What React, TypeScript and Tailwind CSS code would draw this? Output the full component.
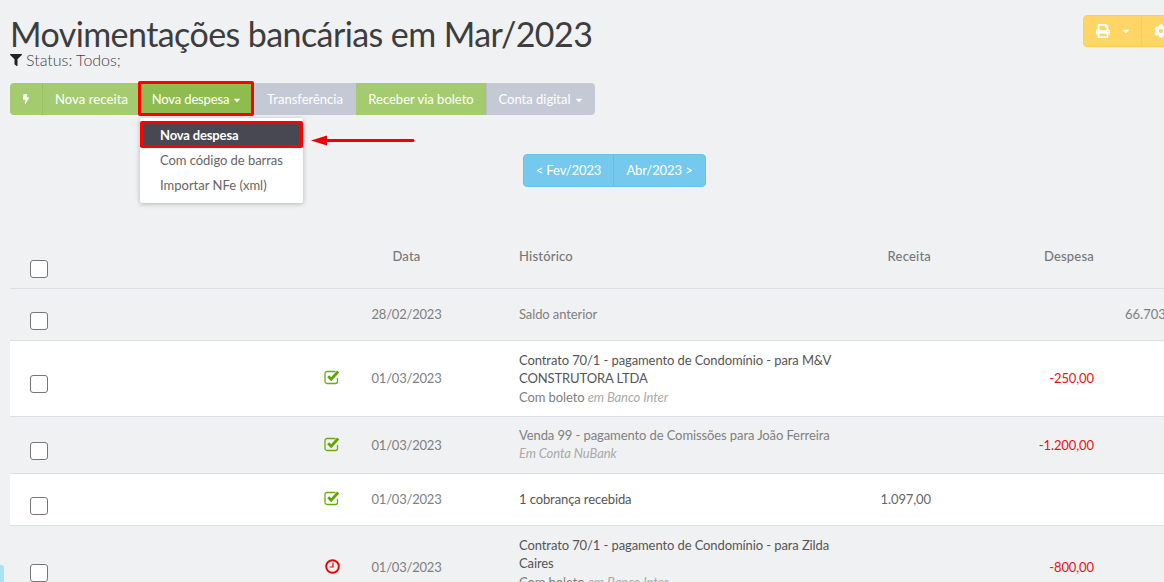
import React from 'react';
import { FaBolt, FaCaretDown, FaCog, FaFilter, FaPrint } from 'react-icons/fa';

const CheckIcon = () => (
  <svg width="17" height="15" viewBox="0 0 17 15" className="block">
    <path d="M13.5 8v3.5a2 2 0 0 1-2 2H3a2 2 0 0 1-2-2V3.5a2 2 0 0 1 2-2h8.5" fill="none" stroke="#6aad0f" strokeWidth="1.3" />
    <path d="M4.2 6.2 7.2 9.2 14.2 1.5" fill="none" stroke="#5ea600" strokeWidth="2.8" />
  </svg>
);

const ClockIcon = () => (
  <svg width="15" height="15" viewBox="0 0 15 15" className="block">
    <circle cx="7.5" cy="7.5" r="6.3" fill="none" stroke="#ee0000" strokeWidth="1.9" />
    <path d="M8 3.6V8H4.6" fill="none" stroke="#ee0000" strokeWidth="1.2" />
  </svg>
);

const Checkbox = ({ className = 'mt-[12px]' }: { className?: string }) => (
  <div className={`w-[18px] h-[18px] rounded-[3px] border border-[#767676] bg-white ml-[20px] ${className}`} />
);

interface RowProps {
  bg: string;
  height: string;
  icon?: React.ReactNode;
  date: string;
  children: React.ReactNode;
  muted?: boolean;
  receita?: string;
  despesa?: string;
  saldo?: string;
  checkClass?: string;
  textClass?: string;
  numClass?: string;
}

const Row: React.FC<RowProps> = ({ bg, height, icon, date, children, muted, receita, despesa, saldo, checkClass, textClass, numClass }) => (
  <div className={`flex items-center border-b border-[#dde0e3] ${bg} ${height}`}>
    <div className="w-[300px] shrink-0">
      <Checkbox className={checkClass} />
    </div>
    <div className="w-[45px] shrink-0 flex justify-center mb-[2px]">{icon}</div>
    <div className={`w-[102px] shrink-0 text-center text-[#808080] tracking-[-0.2px] pl-[1px] ${numClass ?? ''}`}>{date}</div>
    <div className={`w-[402px] shrink-0 pl-[62px] pr-[22px] leading-[18.5px] tracking-[-0.1px] ${muted ? 'text-[#808080]' : 'text-[#555555]'} ${textClass ?? ''}`}>
      {children}
    </div>
    <div className="w-[72px] shrink-0 text-right text-[#666666] tracking-[-0.1px]">{receita}</div>
    <div className={`w-[163px] shrink-0 text-right text-[#ee1111] tracking-[-0.1px] ${numClass ?? ''}`}>{despesa}</div>
    <div className="pl-[31px] whitespace-nowrap text-[#808080]">{saldo}</div>
  </div>
);

const App: React.FC = () => {
  return (
    <div className="relative w-[1164px] h-[582px] overflow-hidden bg-[#f0f1f3] font-['Lato',sans-serif] text-[13px]">
      <div className="w-[1209px] ml-[10px]">
        {/* Title */}
        <div className="flex justify-between items-start h-[52px]">
          <h1 className="text-[34px] leading-[36px] mt-[16px] text-[#3d3d3d] font-normal tracking-[-0.58px] whitespace-nowrap">
            Movimentações bancárias em Mar/2023
          </h1>
          <div className="flex mt-[15px] h-[32px] rounded-[4px] bg-[#ffd666] text-white border border-[#fccf5c]">
            <div className="w-[58px] flex items-center pl-[12px] gap-[11px] border-r border-[#fccb55]">
              <FaPrint size={14} />
              <FaCaretDown size={10} />
            </div>
            <div className="w-[76px] flex items-center pl-[12px]">
              <FaCog size={14} />
            </div>
          </div>
        </div>
        <div className="flex items-center gap-[4px] h-[15px] text-[16px] leading-[15px] font-light text-[#444444]">
          <FaFilter size={12} className="text-[#222222]" />
          <span>Status: Todos;</span>
        </div>

        {/* Toolbar */}
        <div className="relative flex w-fit h-[32px] mt-[16px] text-white">
          <div className="w-[33px] flex items-center justify-center rounded-l-[4px] bg-[#a5cb70] border-r border-[#97c05e]">
            <FaBolt size={10} />
          </div>
          <div className="w-[97px] pt-[1px] flex items-center justify-center bg-[#a5cb70] tracking-[0.1px]">Nova receita</div>
          <div className="w-[114px] pt-[1px] flex items-center justify-center gap-[3px] bg-[#8fbc4f] tracking-[-0.15px]">
            Nova despesa <FaCaretDown size={10} />
          </div>
          <div className="w-[102px] pt-[1px] flex items-center justify-center bg-[#c5c9d5]">Transferência</div>
          <div className="w-[130px] pt-[1px] flex items-center justify-center bg-[#a5cb70]">Receber via boleto</div>
          <div className="w-[109px] pt-[1px] flex items-center justify-center gap-[3px] rounded-r-[4px] bg-[#c5c9d5] border-l border-[#b9bdca]">
            Conta digital <FaCaretDown size={10} />
          </div>
          <div className="absolute left-[128px] -top-[2px] w-[116px] h-[35px] border-[3px] border-[#ff0000] rounded-[2px]" />

          {/* Dropdown */}
          <div className="absolute left-[130px] top-[35px] w-[163px] h-[85px] bg-white rounded-[2px] shadow-[0_1px_5px_rgba(0,0,0,0.25)] pt-[6px] text-[#666666]">
            <div className="relative h-[23px] flex items-center pl-[20px] bg-[#484852] text-white font-bold tracking-[-0.15px]">
              Nova despesa
              <div className="absolute left-0 -top-[3px] w-[163px] h-[27px] border-[3px] border-[#ff0000] rounded-[2px]" />
            </div>
            <div className="h-[25px] mt-[1px] flex items-center pl-[20px] tracking-[-0.05px]">Com código de barras</div>
            <div className="h-[25px] flex items-center pl-[20px]">Importar NFe (xml)</div>
          </div>
        </div>

        {/* Pager */}
        <div className="flex justify-center mt-[39px]">
          <div className="flex h-[33px] rounded-[4px] bg-[#75c9ef] border border-[#6cc1e8] text-white text-[13px] tracking-[-0.1px]">
            <div className="w-[90px] flex items-center justify-center border-r border-[#64bce4]">&lt; Fev/2023</div>
            <div className="w-[91px] flex items-center justify-center">Abr/2023 &gt;</div>
          </div>
        </div>

        {/* Table */}
        <div className="mt-[43px]">
          <div className="relative flex h-[59px] border-b border-[#dde0e3] font-medium text-[#777777] tracking-[0.2px]">
            <div className="w-[300px] shrink-0 pt-[18px]">
              <Checkbox />
            </div>
            <div className="w-[45px] shrink-0" />
            <div className="w-[102px] shrink-0 text-center pl-[1px] pt-[17px]">Data</div>
            <div className="w-[402px] shrink-0 pl-[62px] pt-[17px]">Histórico</div>
            <div className="w-[72px] shrink-0 text-right pt-[17px]">Receita</div>
            <div className="w-[163px] shrink-0 text-right pt-[17px]">Despesa</div>
          </div>
          <Row bg="" height="h-[52px]" date="28/02/2023" muted saldo="66.703,58">
            Saldo anterior
          </Row>
          <Row bg="bg-white" height="h-[76px]" icon={<CheckIcon />} date="01/03/2023" despesa="-250,00" checkClass="mt-[11px]">
            Contrato 70/1 - pagamento de Condomínio - para M&amp;V CONSTRUTORA LTDA
            <div className="text-[#808080]">
              Com boleto <em className="text-[#aaaaaa]">em Banco Inter</em>
            </div>
          </Row>
          <Row bg="" height="h-[57px]" icon={<CheckIcon />} date="01/03/2023" muted despesa="-1.200,00" textClass="mb-[2px]" numClass="pt-[2px]">
            Venda 99 - pagamento de Comissões para João Ferreira
            <div>
              <em className="text-[#aaaaaa]">Em Conta NuBank</em>
            </div>
          </Row>
          <Row bg="bg-white" height="h-[52px]" icon={<CheckIcon />} date="01/03/2023" receita="1.097,00">
            1 cobrança recebida
          </Row>
          <Row bg="" height="h-[84px]" icon={<ClockIcon />} date="01/03/2023" despesa="-800,00" textClass="mb-[8px]" checkClass="mt-[10px]">
            Contrato 70/1 - pagamento de Condomínio - para Zilda Caires
            <div className="text-[#808080]">
              Com boleto <em className="text-[#aaaaaa]">em Banco Inter</em>
            </div>
          </Row>
        </div>
      </div>

      {/* Red arrow annotation */}
      <svg className="absolute left-[305px] top-[130px]" width="115" height="20" viewBox="0 0 115 20">
        <path d="M6 10.5 22 5.5V9H108a1.5 1.5 0 0 1 0 3H22V15.5Z" fill="#ee0000" />
      </svg>

      {/* Chat bubble clipped by page edge */}
      <div className="absolute left-0 top-[565px] w-[4px] h-[17px] rounded-tr-[3px] bg-[#a9e3f0]" />
    </div>
  );
};

export default App;
